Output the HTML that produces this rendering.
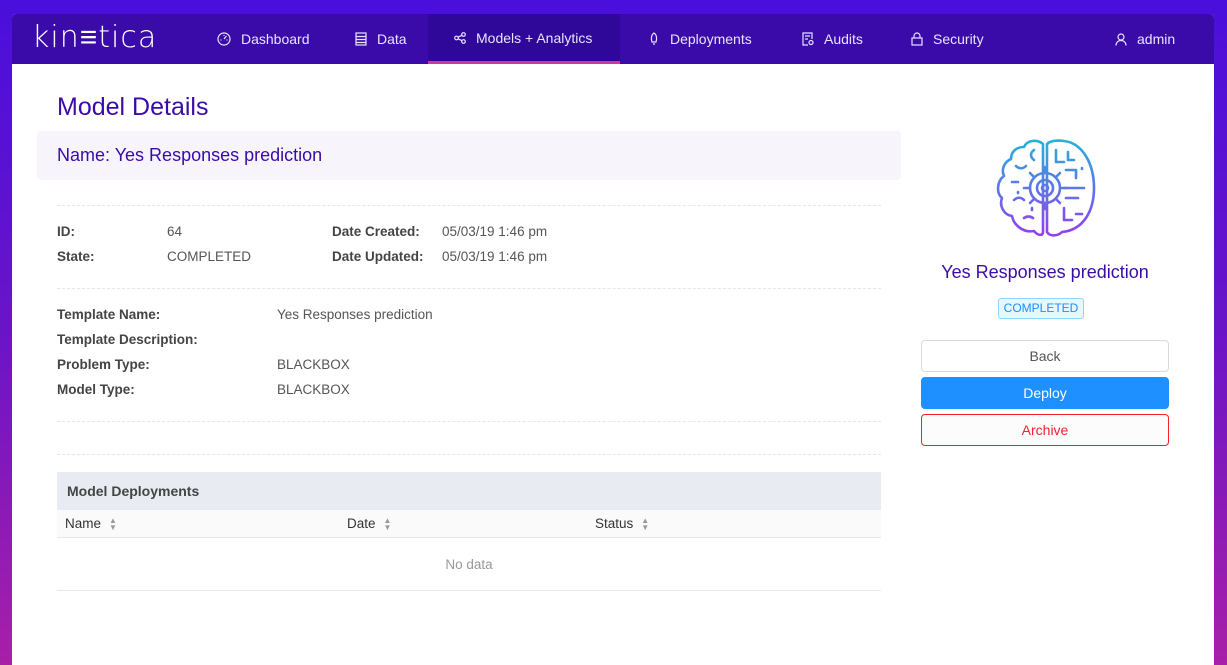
<!DOCTYPE html>
<html style="background:#7a18c0"><head><meta charset="utf-8"><style>
*{box-sizing:border-box;margin:0;padding:0}
html,body{width:1227px;height:665px;overflow:hidden}
body{font-family:"Liberation Sans",sans-serif;background:linear-gradient(180deg,#4a0fdc 0%,#6a14c8 50%,#a81fa8 100%);position:relative}
.card{position:absolute;left:12px;top:14px;width:1202px;height:651px;background:#fff;border-radius:4px 4px 0 0;overflow:hidden}
.nav{height:50px;background:#3a0ba8;position:relative;color:#e8e4ff;font-size:14px}
.nav .i{position:absolute;top:0;height:50px;display:flex;align-items:center;gap:10px}
.logo{position:absolute;left:20px;top:6px;color:#fff;font-size:30px;letter-spacing:1px;font-family:"DejaVu Sans",sans-serif;font-weight:200}
.active{background:#300899;border-bottom:3px solid #d2369a}
h1{position:absolute;left:45px;top:79px;font-size:25px;font-weight:normal;color:#3a0ba8}
.namebar{position:absolute;left:25px;top:117px;width:864px;height:49px;background:#f7f4fc;border-radius:4px;color:#3a0ba8;font-size:18px;line-height:49px;padding-left:20px}
.hr{position:absolute;left:45px;width:824px;border-top:1px dashed #e6e6e6}
.t{position:absolute;font-size:13.5px;color:#555}
.b{font-weight:bold;color:#444}
.tbl{position:absolute;left:45px;top:458px;width:824px}
.th{height:38px;background:#e9ebf2;font-weight:bold;color:#444;font-size:14px;line-height:38px;padding-left:10px}
.cols{height:28px;background:#fafafa;border-bottom:1px solid #e8e8e8;position:relative;font-size:13.5px;color:#333}
.cols span{position:absolute;top:6px}
.nd{height:53px;border-bottom:1px solid #e8e8e8;text-align:center;line-height:53px;font-size:13.5px;color:#999}
.sort{display:inline-block;vertical-align:middle;margin-left:8px;font-size:8px;line-height:7px;color:#999;font-style:normal}
.btn{position:absolute;left:909px;width:248px;height:32px;border-radius:4px;text-align:center;line-height:30px;font-size:14px}
svg.ic{fill:none;stroke:#e8e4ff;stroke-width:1.2}
</style></head><body>
<div class="card">
<div class="nav">
<div class="logo">kin<span>≡</span>tica</div>
<div class="i" style="left:205px"><svg class="ic" width="14" height="14" viewBox="0 0 14 14"><circle cx="7" cy="7" r="6"/><path d="M7 7L9.5 4M3.5 8h1M9.5 8h1M7 3v1"/></svg>Dashboard</div>
<div class="i" style="left:343px"><svg class="ic" width="12" height="14" viewBox="0 0 12 14"><rect x="1" y="1" width="10" height="12"/><path d="M1 4.5h10M1 7.5h10M1 10.5h10"/></svg>Data</div>
<div class="i active" style="left:416px;width:192px;padding-left:26px"><svg class="ic" width="12" height="12" viewBox="0 0 12 12"><circle cx="2.5" cy="6" r="1.8"/><circle cx="9.5" cy="2.5" r="1.8"/><circle cx="9.5" cy="9.5" r="1.8"/><path d="M4 5.2L8 3.3M4 6.8L8 8.7"/></svg>Models + Analytics</div>
<div class="i" style="left:636px"><svg class="ic" width="12" height="14" viewBox="0 0 12 14"><path d="M6 1C3 3 3 7 4 10h4C9 7 9 3 6 1ZM5 12h2"/></svg>Deployments</div>
<div class="i" style="left:790px"><svg class="ic" width="12" height="14" viewBox="0 0 12 14"><path d="M10 7V1H1v12h5"/><path d="M3 4h5M3 7h3"/><circle cx="9" cy="10.5" r="2"/></svg>Audits</div>
<div class="i" style="left:899px"><svg class="ic" width="12" height="14" viewBox="0 0 12 14"><rect x="1" y="6" width="10" height="7"/><path d="M3 6V4a3 3 0 0 1 6 0v2"/></svg>Security</div>
<div class="i" style="left:1103px"><svg class="ic" width="12" height="13" viewBox="0 0 12 13"><circle cx="6" cy="4" r="3"/><path d="M1 12.5c0-3 2.2-5 5-5s5 2 5 5"/></svg>admin</div>
</div>
<h1>Model Details</h1>
<div class="namebar">Name: Yes Responses prediction</div>
<div class="hr" style="top:191px"></div>
<div class="t b" style="left:45px;top:210px">ID:</div><div class="t" style="left:155px;top:210px">64</div>
<div class="t b" style="left:45px;top:235px">State:</div><div class="t" style="left:155px;top:235px">COMPLETED</div>
<div class="t b" style="left:320px;top:210px">Date Created:</div><div class="t" style="left:430px;top:210px">05/03/19 1:46 pm</div>
<div class="t b" style="left:320px;top:235px">Date Updated:</div><div class="t" style="left:430px;top:235px">05/03/19 1:46 pm</div>
<div class="hr" style="top:274px"></div>
<div class="t b" style="left:45px;top:293px">Template Name:</div><div class="t" style="left:265px;top:293px">Yes Responses prediction</div>
<div class="t b" style="left:45px;top:318px">Template Description:</div>
<div class="t b" style="left:45px;top:343px">Problem Type:</div><div class="t" style="left:265px;top:343px">BLACKBOX</div>
<div class="t b" style="left:45px;top:368px">Model Type:</div><div class="t" style="left:265px;top:368px">BLACKBOX</div>
<div class="hr" style="top:407px"></div>
<div class="hr" style="top:440px"></div>
<div class="tbl">
<div class="th">Model Deployments</div>
<div class="cols"><span style="left:8px">Name<i class="sort">▲<br>▼</i></span><span style="left:290px">Date<i class="sort">▲<br>▼</i></span><span style="left:538px">Status<i class="sort">▲<br>▼</i></span></div>
<div class="nd">No data</div>
</div>
<svg style="position:absolute;left:982px;top:124px" width="102" height="104" viewBox="0 0 102 104" fill="none" stroke="url(#g)" stroke-width="2.6" stroke-linecap="round" stroke-linejoin="round">
<defs><linearGradient id="g" x1="0" y1="0" x2="0" y2="104" gradientUnits="userSpaceOnUse"><stop offset="0" stop-color="#22b4da"/><stop offset="1" stop-color="#9d35f2"/></linearGradient></defs>
<path d="M49 6C43 1 33 2 30 9C22 9 17 14 17 21C10 24 7 32 10 38C3 43 2 55 8 60C5 68 10 77 18 78C20 88 30 95 40 93C44 98 49 98 49 94Z"/>
<path d="M53 6V94C56 99 64 98 68 94C90 92 100 72 100 50C100 25 88 5 70 3C62 2 56 3 53 6Z"/>
<circle cx="51" cy="50" r="15"/><circle cx="51" cy="50" r="8"/><circle cx="51" cy="50" r="3"/>
<path d="M51 29v6M51 65v6M30 50h6M66 50h6M36 35l4 4M62 61l4 4M36 65l4-4M62 39l4-4"/>
<path d="M62 12v12h8M74 14v8h6M72 32h10v8M70 50h20M72 60h12M70 70v12h8M82 76h6M40 12c-4 3-4 7 0 10M22 28c3 3 7 3 10 0M18 44h6M20 62c3-3 7-3 10 0M30 80c3-2 6-2 9 0M38 70v2M24 54v1M88 30v1"/>
</svg>
<div style="position:absolute;left:909px;width:248px;top:248px;text-align:center;font-size:18px;color:#3a0ba8">Yes Responses prediction</div>
<div style="position:absolute;left:986px;top:284px;width:86px;height:21px;border:1px solid #91d5ff;background:#e6f7ff;border-radius:3px;color:#1890ff;font-size:12px;text-align:center;line-height:19px">COMPLETED</div>
<div class="btn" style="top:326px;border:1px solid #d9d9d9;color:#555">Back</div>
<div class="btn" style="top:363px;background:#1e90ff;color:#fff;border:1px solid #1e90ff">Deploy</div>
<div class="btn" style="top:400px;border:1px solid #f5222d;color:#f5222d;background:#fcfcfc">Archive</div>
</div>
</body></html>
